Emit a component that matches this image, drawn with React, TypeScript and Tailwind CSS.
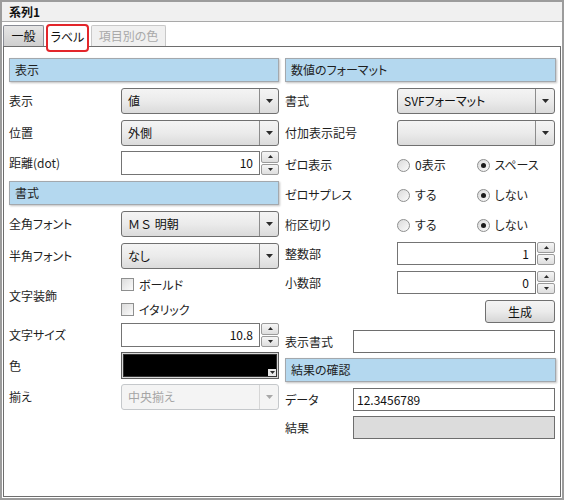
import React from 'react';

const Arrow = ({ color = '#2b2b2b' }: { color?: string }) => (
  <svg width="7" height="4" viewBox="0 0 7 4">
    <path d="M0 0h7L3.5 4z" fill={color} />
  </svg>
);

const SmallArrow = ({ up }: { up?: boolean }) => (
  <svg width="5" height="3" viewBox="0 0 5 3">
    <path d={up ? 'M0 3h5L2.5 0z' : 'M0 0h5L2.5 3z'} fill="#2b2b2b" />
  </svg>
);

function Header({ children, className = '' }: { children: React.ReactNode; className?: string }) {
  return (
    <div
      className={`flex h-[24px] items-center border border-[#a3a8ad] bg-[#b4d8ef] pl-[5px] text-[#1e1e1e] shadow-[1px_1px_2px_rgba(0,0,0,0.25)] ${className}`}
    >
      {children}
    </div>
  );
}

function Row({
  label,
  children,
  className = '',
  labelW = 'w-[112px]',
}: {
  label: string;
  children: React.ReactNode;
  className?: string;
  labelW?: string;
}) {
  return (
    <div className={`flex items-center ${className}`}>
      <div className={`${labelW} shrink-0 text-[#1e1e1e]`}>{label}</div>
      {children}
    </div>
  );
}

function Combo({ value, disabled, plain }: { value?: string; disabled?: boolean; plain?: boolean }) {
  return (
    <div
      className={`flex h-[26px] w-[158px] rounded-[3px] border ${
        disabled
          ? 'border-[#c5c8cb] bg-[#f4f4f4] text-[#a5a5a5]'
          : 'border-[#707070] bg-linear-to-b from-[#f4f4f4] via-[#ebebeb] to-[#dbdbdb] text-[#111]'
      }`}
    >
      <div className={`flex flex-1 items-center pl-[6px] ${plain ? '[font-feature-settings:normal]' : ''}`}>
        {value}
      </div>
      <div
        className={`flex w-[19px] items-center justify-center border-l ${
          disabled ? 'border-[#d6d6d6]' : 'border-[#8c8c8c]'
        }`}
      >
        <Arrow color={disabled ? '#a8a8a8' : '#2b2b2b'} />
      </div>
    </div>
  );
}

function Spin({ value, h = 'h-[24px]' }: { value: string; h?: string }) {
  return (
    <div className={`flex ${h} w-[158px]`}>
      <div className="flex flex-1 items-center justify-end border border-[#747474] bg-white pr-[6px] text-[#111]">
        {value}
      </div>
      <div className="ml-px flex w-[18px] flex-col gap-px">
        <div className="flex flex-1 items-center justify-center rounded-[2px] border border-[#9a9a9a] bg-linear-to-b from-[#f6f6f6] to-[#dedede]">
          <SmallArrow up />
        </div>
        <div className="flex flex-1 items-center justify-center rounded-[2px] border border-[#9a9a9a] bg-linear-to-b from-[#f6f6f6] to-[#dedede]">
          <SmallArrow />
        </div>
      </div>
    </div>
  );
}

function Check({ label, className = '' }: { label: string; className?: string }) {
  return (
    <div className={`flex items-center gap-[5px] ${className}`}>
      <div className="h-[13px] w-[13px] border border-[#8e8f8f] bg-linear-to-br from-[#dcdcdc] to-[#fbfbfb]" />
      <span className="text-[#1e1e1e]">{label}</span>
    </div>
  );
}

function Radio({ label, checked }: { label: string; checked?: boolean }) {
  return (
    <div className="flex w-[82px] items-center gap-[5px]">
      <div className="flex h-[13px] w-[13px] items-center justify-center rounded-full border border-[#8e8f8f] bg-linear-to-br from-[#dadada] to-[#fbfbfb]">
        {checked && <div className="h-[5px] w-[5px] rounded-full bg-[#1b1b1b]" />}
      </div>
      <span className="text-[#1e1e1e]">{label}</span>
    </div>
  );
}

function RadioRow({ label, a, b, className = '' }: { label: string; a: string; b: string; className?: string }) {
  return (
    <Row label={label} className={`h-[30px] ${className}`}>
      <Radio label={a} />
      <Radio label={b} checked />
    </Row>
  );
}

function ColorBox() {
  return (
    <div className="relative h-[27px] w-[158px] border border-[#5e5e5e] bg-[#d8d8d8] p-px">
      <div className="h-full w-full border border-[#333] bg-black" />
      <div className="absolute bottom-[2px] right-[2px] flex h-[7px] w-[8px] items-center justify-center bg-[#e8e8e8]">
        <SmallArrow />
      </div>
    </div>
  );
}

function TextBox({ value, gray }: { value?: string; gray?: boolean }) {
  return (
    <div
      className={`flex h-[23px] w-[202px] items-center border border-[#6e6e6e] pl-[3px] text-[#111] ${
        gray ? 'bg-[#dcdcdc]' : 'bg-white'
      }`}
    >
      {value}
    </div>
  );
}

export default function App() {
  return (
    <div className="flex h-[500px] w-[564px] flex-col border-2 border-[#9c9c9c] bg-white font-['Noto_Sans_CJK_JP','Noto_Sans',sans-serif] text-[12px] leading-none [font-feature-settings:'palt']">
      <div className="flex h-[20px] shrink-0 items-center border-b border-[#a9a9a9] bg-[#f0f0f0] pl-[7px] font-bold text-[#111]">
        系列1
      </div>

      <div className="flex flex-1 flex-col px-px pb-px pt-[3px]">
        <div className="flex h-[21px] items-stretch">
          <div className="flex w-[41px] items-center justify-center rounded-t-[2px] border border-b-0 border-[#898c95] bg-linear-to-b from-[#e6e6e6] to-[#cfcfcf] text-[#111]">
            一般
          </div>
          <div className="relative z-10 -mb-px ml-[3px] flex w-[41px] items-center justify-center rounded-t-[2px] border border-b-0 border-[#898c95] bg-white text-[#111]">
            ラベル
            <div className="absolute left-[-2px] right-[-2px] top-[-2px] h-[28px] rounded-[4px] border-2 border-[#e3262b]" />
          </div>
          <div className="ml-[3px] flex w-[75px] items-center justify-center rounded-t-[2px] border border-b-0 border-[#c8c8c8] bg-[#f0f0f0] text-[#a9a9a9]">
            項目別の色
          </div>
        </div>

        <div className="flex flex-1 gap-[6px] border border-[#6e6e6e] pl-[5px]">
          <div className="flex w-[270px] flex-col">
            <Header className="mt-[11px]">表示</Header>
            <Row label="表示" className="mt-[6px]">
              <Combo value="値" />
            </Row>
            <Row label="位置" className="mt-[6px]">
              <Combo value="外側" />
            </Row>
            <Row label="距離(dot)" className="mt-[5px]">
              <Spin value="10" />
            </Row>
            <Header className="mt-[6px]">書式</Header>
            <Row label="全角フォント" className="mt-[6px]">
              <Combo value="ＭＳ 明朝" plain />
            </Row>
            <Row label="半角フォント" className="mt-[6px]">
              <Combo value="なし" />
            </Row>
            <div className="mt-[6px] flex h-[45px]">
              <div className="flex w-[112px] items-center pb-[4px] text-[#1e1e1e]">文字装飾</div>
              <div className="flex flex-col">
                <Check label="ボールド" className="h-[19px]" />
                <Check label="イタリック" className="mt-[6px] h-[19px]" />
              </div>
            </div>
            <Row label="文字サイズ" className="mt-[3px]">
              <Spin value="10.8" />
            </Row>
            <Row label="色" className="mt-[5px]">
              <ColorBox />
            </Row>
            <Row label="揃え" className="mt-[5px]">
              <Combo value="中央揃え" disabled />
            </Row>
          </div>

          <div className="flex w-[271px] flex-col">
            <Header className="mt-[11px]">数値のフォーマット</Header>
            <Row label="書式" className="mt-[6px]">
              <Combo value="SVFフォーマット" />
            </Row>
            <Row label="付加表示記号" className="mt-[6px]">
              <Combo value="" />
            </Row>
            <RadioRow label="ゼロ表示" a="0表示" b="スペース" className="mt-[4px]" />
            <RadioRow label="ゼロサプレス" a="する" b="しない" />
            <RadioRow label="桁区切り" a="する" b="しない" />
            <Row label="整数部" className="mt-[2px]">
              <Spin value="1" h="h-[23px]" />
            </Row>
            <Row label="小数部" className="mt-[6px]">
              <Spin value="0" h="h-[23px]" />
            </Row>
            <div className="mt-[6px] flex justify-end pr-px">
              <div className="flex h-[23px] w-[70px] items-center justify-center rounded-[3px] border border-[#707070] bg-linear-to-b from-[#f4f4f4] via-[#ebebeb] to-[#d6d6d6] text-[#111]">
                生成
              </div>
            </div>
            <Row label="表示書式" labelW="w-[68px]" className="mt-[7px]">
              <TextBox />
            </Row>
            <Header className="mt-[5px]">結果の確認</Header>
            <Row label="データ" labelW="w-[68px]" className="mt-[6px]">
              <TextBox value="12.3456789" />
            </Row>
            <Row label="結果" labelW="w-[68px]" className="mt-[5px]">
              <TextBox gray />
            </Row>
          </div>
        </div>
      </div>
    </div>
  );
}
